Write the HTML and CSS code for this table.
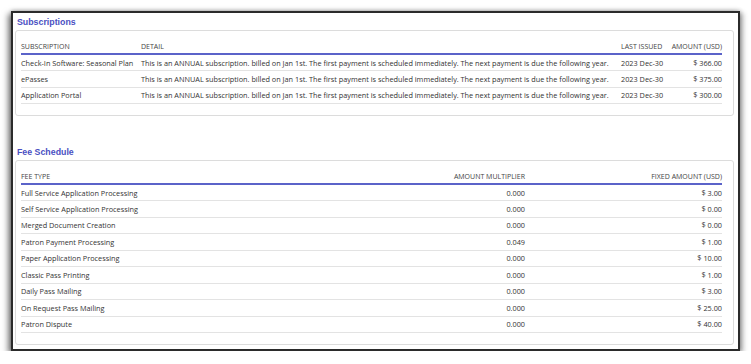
FILE: index.html
```html
<!DOCTYPE html>
<html lang="en">
<head>
  <meta charset="UTF-8">
  <title>Subscriptions and Fees</title>
  <link rel="stylesheet" href="styles.css">
</head>
<body>
  <div class="window">
    <h2 class="section-title">Subscriptions</h2>
    <div class="card">
      <table class="data-table subs">
        <thead>
          <tr>
            <th class="col-name">SUBSCRIPTION</th>
            <th class="col-detail">DETAIL</th>
            <th class="col-date">LAST ISSUED</th>
            <th class="num">AMOUNT (USD)</th>
          </tr>
        </thead>
        <tbody>
          <tr>
            <td>Check-In Software: Seasonal Plan</td>
            <td>This is an ANNUAL subscription. billed on Jan 1st. The first payment is scheduled immediately. The next payment is due the following year.</td>
            <td>2023 Dec-30</td>
            <td class="num">$ 366.00</td>
          </tr>
          <tr>
            <td>ePasses</td>
            <td>This is an ANNUAL subscription. billed on Jan 1st. The first payment is scheduled immediately. The next payment is due the following year.</td>
            <td>2023 Dec-30</td>
            <td class="num">$ 375.00</td>
          </tr>
          <tr>
            <td>Application Portal</td>
            <td>This is an ANNUAL subscription. billed on Jan 1st. The first payment is scheduled immediately. The next payment is due the following year.</td>
            <td>2023 Dec-30</td>
            <td class="num">$ 300.00</td>
          </tr>
        </tbody>
      </table>
    </div>

    <h2 class="section-title fees-title">Fee Schedule</h2>
    <div class="card">
      <table class="data-table fees">
        <thead>
          <tr>
            <th>FEE TYPE</th>
            <th class="num col-mult">AMOUNT MULTIPLIER</th>
            <th class="num col-fixed">FIXED AMOUNT (USD)</th>
          </tr>
        </thead>
        <tbody>
          <tr><td>Full Service Application Processing</td><td class="num">0.000</td><td class="num">$ 3.00</td></tr>
          <tr><td>Self Service Application Processing</td><td class="num">0.000</td><td class="num">$ 0.00</td></tr>
          <tr><td>Merged Document Creation</td><td class="num">0.000</td><td class="num">$ 0.00</td></tr>
          <tr><td>Patron Payment Processing</td><td class="num">0.049</td><td class="num">$ 1.00</td></tr>
          <tr><td>Paper Application Processing</td><td class="num">0.000</td><td class="num">$ 10.00</td></tr>
          <tr><td>Classic Pass Printing</td><td class="num">0.000</td><td class="num">$ 1.00</td></tr>
          <tr><td>Daily Pass Mailing</td><td class="num">0.000</td><td class="num">$ 3.00</td></tr>
          <tr><td>On Request Pass Mailing</td><td class="num">0.000</td><td class="num">$ 25.00</td></tr>
          <tr><td>Patron Dispute</td><td class="num">0.000</td><td class="num">$ 40.00</td></tr>
        </tbody>
      </table>
    </div>
  </div>
</body>
</html>
```

FILE: styles.css
```css
* {
  box-sizing: border-box;
}

body {
  margin: 0;
  padding: 11px 0 0 11px;
  background: #fff;
  font-family: 'Open Sans', sans-serif;
  color: #333;
}

.window {
  width: 729px;
  height: 340px;
  border: 2px solid #2b2b2b;
  box-shadow: -3px 3px 6px rgba(0, 0, 0, 0.5), 3px 2px 5px rgba(0, 0, 0, 0.3), 0 -1px 4px rgba(0, 0, 0, 0.2);
  padding: 3px 4px 0 2px;
  background: #fff;
  overflow: hidden;
}

.section-title {
  margin: 0 0 2px 2px;
  font-family: 'Liberation Sans', sans-serif;
  font-size: 8.8px;
  font-weight: bold;
  line-height: 12px;
  color: #4a50c2;
}

.fees-title {
  margin-top: 30px;
}

.card {
  border: 1px solid #dcdcdc;
  border-radius: 3px;
  padding: 8px 11px 11px 5px;
}

.data-table {
  width: 100%;
  table-layout: fixed;
  border-collapse: collapse;
  font-size: 7.3px;
}

.data-table th {
  font-weight: normal;
  font-size: 7px;
  text-align: left;
  color: #444;
  height: 15px;
  padding: 0;
  border-bottom: 2px solid #5b63c9;
  white-space: nowrap;
}

.data-table td {
  height: 16.5px;
  padding: 0;
  border-bottom: 1px solid #e3e3e3;
  white-space: nowrap;
}

.data-table .num {
  text-align: right;
}

.col-name {
  width: 120px;
}

.col-detail {
  width: 480px;
}

.col-date {
  width: 48px;
}

.col-mult {
  width: 150px;
}

.col-fixed {
  width: 197px;
}
```
